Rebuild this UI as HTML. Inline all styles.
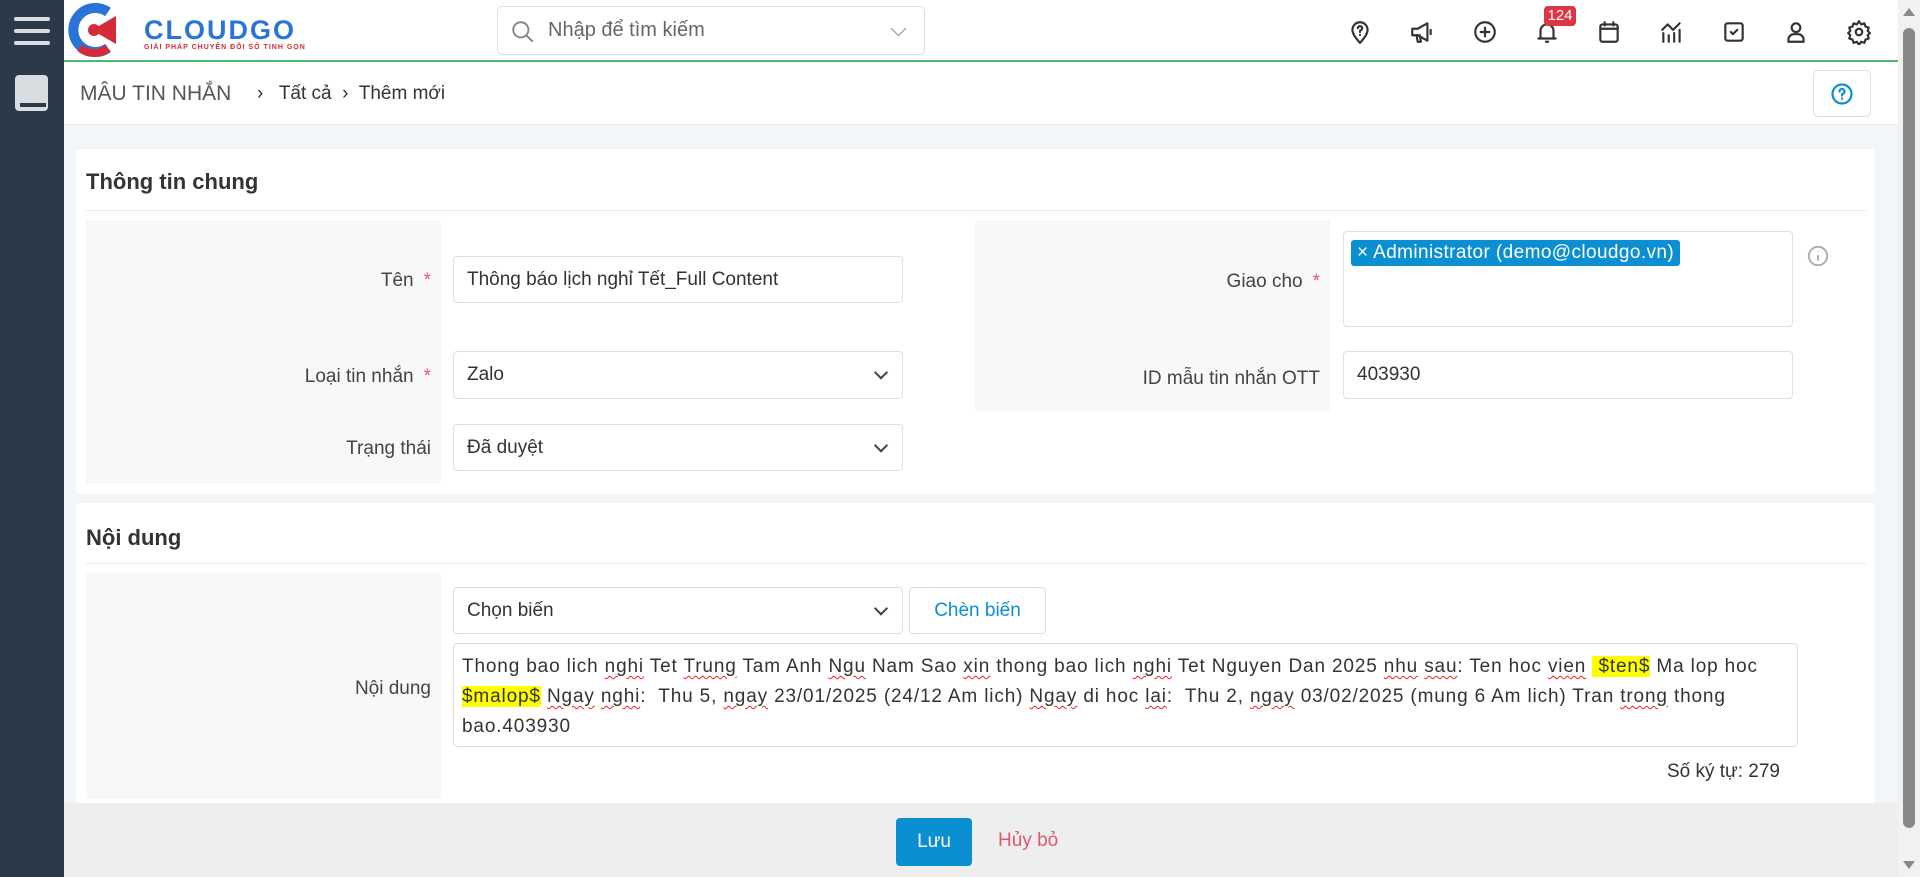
<!DOCTYPE html>
<html><head><meta charset="utf-8"><style>
*{box-sizing:border-box;margin:0;padding:0}
body{width:1920px;height:877px;overflow:hidden;background:#f3f6f9;font-family:"Liberation Sans",sans-serif;color:#333;position:relative;font-size:18px}
.abs{position:absolute}
.side{left:0;top:0;width:64px;height:877px;background:#2b3a49}
.top{left:64px;top:0;width:1834px;height:62px;background:#fff;border-bottom:2px solid #4cbb6c}
.bc{left:64px;top:62px;width:1834px;height:63px;background:#fff;border-bottom:1px solid #e3e6ea}
.card{background:#fff;border-radius:4px}
.gray{background:#f7f8fa}
.inp{background:#fff;border:1px solid #dcdfe3;border-radius:4px;padding:0 13px;display:flex;align-items:center;font-size:19px;color:#333}
.lbl{font-size:19px;color:#444;text-align:right}
.req{color:#e05a6c;margin-left:10px}
.chev{position:absolute;right:16px;top:50%;width:10px;height:10px;border-right:2px solid #444;border-bottom:2px solid #444;transform:translateY(-75%) rotate(45deg)}
.h{font-size:22px;font-weight:bold;color:#333}
.ul{text-decoration:underline wavy #e22;text-decoration-thickness:1px;text-underline-offset:3px}
.hl{background:#ffff00}
svg.ic{position:absolute;top:19px;width:26px;height:26px;fill:none;stroke:#333;stroke-width:2;stroke-linecap:round;stroke-linejoin:round}
</style></head><body>
<div class="abs side">
  <div class="abs" style="left:14px;top:17px;width:36px;height:4px;background:#d9dde2;border-radius:2px"></div>
  <div class="abs" style="left:14px;top:29px;width:36px;height:4px;background:#d9dde2;border-radius:2px"></div>
  <div class="abs" style="left:14px;top:41px;width:36px;height:4px;background:#d9dde2;border-radius:2px"></div>
  <div class="abs" style="left:15px;top:75px;width:33px;height:36px;background:#d9dde2;border-radius:4px"></div>
  <div class="abs" style="left:20px;top:103px;width:26px;height:4px;background:#2b3a49"></div>
</div>
<div class="abs top">
  <svg class="abs" style="left:4px;top:2px" width="62" height="56" viewBox="0 0 62 56"><path d="M40 10 A22 22 0 1 0 40 46" stroke="#2a74d8" stroke-width="10" fill="none"/><path d="M24 28 L48 14 L48 42 Z" fill="#d42a3a"/><circle cx="26" cy="28" r="6" fill="#d42a3a"/><path d="M12 46 A22 22 0 0 0 40 46" stroke="#d42a3a" stroke-width="8" fill="none"/></svg>
  <div class="abs" style="left:80px;top:15px;font-size:27px;font-weight:bold;color:#2a74d8;letter-spacing:2px">CLOUDGO</div>
  <div class="abs" style="left:80px;top:44px;font-size:7px;font-weight:bold;color:#d42a3a;letter-spacing:1px">GIẢI PHÁP CHUYỂN ĐỔI SỐ TINH GỌN</div>
  <div class="abs" style="left:433px;top:6px;width:428px;height:49px;border:1px solid #dcdfe3;border-radius:5px">
    <svg class="abs" style="left:12px;top:12px" width="26" height="26" viewBox="0 0 24 24" fill="none" stroke="#888" stroke-width="1.8"><circle cx="10" cy="10" r="7"/><path d="M15 15l6 6"/></svg>
    <div class="abs" style="left:50px;top:12px;font-size:20px;color:#666">Nhập để tìm kiếm</div>
    <div class="abs" style="right:20px;top:16px;width:11px;height:11px;border-right:1.5px solid #888;border-bottom:1.5px solid #888;transform:rotate(45deg)"></div>
  </div>
  <svg class="ic" style="left:1283px" viewBox="0 0 24 24"><path d="M12 22s-7-7-7-12a7 7 0 0 1 14 0c0 5-7 12-7 12z"/><path d="M10 8.5a2 2 0 1 1 2.5 2c-.5.2-.5.8-.5 1.5M12 14.5v.2"/></svg>
  <svg class="ic" style="left:1345px" viewBox="0 0 24 24"><path d="M3 9h5l9-5v16l-9-5H3z"/><path d="M7 15l1 6h3l-1-6"/><path d="M20 10v4"/></svg>
  <svg class="ic" style="left:1408px" viewBox="0 0 24 24"><circle cx="12" cy="12" r="9"/><path d="M12 8v8M8 12h8"/></svg>
  <svg class="ic" style="left:1470px" viewBox="0 0 24 24"><path d="M6 18V11a6 6 0 0 1 12 0v7M4 18h16M11 21h2"/></svg>
  <div class="abs" style="left:1480px;top:6px;width:32px;height:20px;background:#dc3545;color:#fff;font-size:15px;border-radius:4px;text-align:center;line-height:20px">124</div>
  <svg class="ic" style="left:1532px" viewBox="0 0 24 24"><rect x="4" y="5" width="16" height="16" rx="2"/><path d="M4 9h16M8 3v3M16 3v3"/></svg>
  <svg class="ic" style="left:1595px" viewBox="0 0 24 24"><path d="M4 21v-8M9 21v-6M14 21v-8M19 21v-11M3 10l5-5 5 5 6-6"/></svg>
  <svg class="ic" style="left:1657px" viewBox="0 0 24 24"><rect x="4" y="4" width="16" height="16" rx="2"/><path d="M9 12l2 2 4-4"/></svg>
  <svg class="ic" style="left:1719px" viewBox="0 0 24 24"><circle cx="12" cy="8" r="4"/><path d="M5 21v-2a5 5 0 0 1 5-5h4a5 5 0 0 1 5 5v2z"/></svg>
  <svg class="ic" style="left:1782px" viewBox="0 0 24 24"><circle cx="12" cy="12" r="3"/><path d="M12 2l2 3 3-1 1 3 3 1-1 3 2 2-2 2 1 3-3 1-1 3-3-1-2 3-2-3-3 1-1-3-3-1 1-3-2-2 2-2-1-3 3-1 1-3 3 1z"/></svg>
</div>
<div class="abs bc">
  <div class="abs" style="left:16px;top:20px;font-size:21px;color:#555">MÂU TIN NHẮN</div>
  <div class="abs" style="left:193px;top:21px;font-size:19px;color:#333">›&nbsp;&nbsp; Tất cả &nbsp;›&nbsp; Thêm mới</div>
  <div class="abs" style="left:1749px;top:8px;width:58px;height:47px;border:1px solid #dcdfe3;border-radius:5px">
    <svg class="abs" style="left:16px;top:11px" width="24" height="24" viewBox="0 0 24 24" fill="none" stroke="#0b8fd3" stroke-width="2.2" stroke-linecap="round"><circle cx="12" cy="12" r="9.5"/><path d="M9.5 9.5a2.5 2.5 0 1 1 3 2.4c-.5.2-.5.8-.5 1.6M12 16.5v.3"/></svg>
  </div>
</div>

<div class="abs card" style="left:76px;top:149px;width:1799px;height:345px">
  <div class="abs h" style="left:10px;top:20px">Thông tin chung</div>
  <div class="abs" style="left:10px;top:61px;width:1780px;height:1px;background:#e8eaed"></div>
  <div class="abs gray" style="left:10px;top:71px;width:355px;height:264px"></div>
  <div class="abs lbl" style="left:10px;top:121px;width:345px">Tên<span class="req">*</span></div>
  <div class="abs lbl" style="left:10px;top:217px;width:345px">Loại tin nhắn<span class="req">*</span></div>
  <div class="abs lbl" style="left:10px;top:289px;width:345px">Trạng thái</div>
  <div class="abs inp" style="left:377px;top:107px;width:450px;height:47px">Thông báo lịch nghỉ Tết_Full Content</div>
  <div class="abs inp" style="left:377px;top:202px;width:450px;height:48px">Zalo<span class="chev"></span></div>
  <div class="abs inp" style="left:377px;top:275px;width:450px;height:47px">Đã duyệt<span class="chev"></span></div>
  <div class="abs gray" style="left:899px;top:71px;width:355px;height:191px"></div>
  <div class="abs lbl" style="left:899px;top:122px;width:345px">Giao cho<span class="req">*</span></div>
  <div class="abs lbl" style="left:899px;top:219px;width:345px">ID mẫu tin nhắn OTT</div>
  <div class="abs inp" style="left:1267px;top:82px;width:450px;height:96px;align-items:flex-start;padding:8px 7px">
    <span style="background:#0b8fd3;color:#fff;border-radius:3px;padding:2px 6px;font-size:19px;letter-spacing:0.4px">× Administrator (demo@cloudgo.vn)</span></div>
  <div class="abs inp" style="left:1267px;top:202px;width:450px;height:48px">403930</div>
  <svg class="abs" style="left:1731px;top:96px" width="22" height="22" viewBox="0 0 24 24" fill="none" stroke="#aaa" stroke-width="2"><circle cx="12" cy="12" r="10"/><path d="M12 11v6M12 7v.5"/></svg>
</div>

<div class="abs card" style="left:76px;top:503px;width:1799px;height:300px">
  <div class="abs h" style="left:10px;top:22px">Nội dung</div>
  <div class="abs" style="left:10px;top:60px;width:1780px;height:1px;background:#e8eaed"></div>
  <div class="abs gray" style="left:10px;top:70px;width:355px;height:226px"></div>
  <div class="abs lbl" style="left:10px;top:175px;width:345px">Nội dung</div>
  <div class="abs inp" style="left:377px;top:84px;width:450px;height:47px">Chọn biến<span class="chev"></span></div>
  <div class="abs inp" style="left:833px;top:84px;width:137px;height:47px;justify-content:center;color:#0b8fd3">Chèn biến</div>
  <div class="abs inp" style="left:377px;top:140px;width:1345px;height:104px;align-items:flex-start;padding:8px 8px;line-height:30px;font-size:19px;letter-spacing:0.85px">
    <div style="white-space:nowrap">Thong bao lich <span class="ul">nghi</span> Tet <span class="ul">Trung</span> Tam Anh <span class="ul">Ngu</span> Nam Sao <span class="ul">xin</span> thong bao lich <span class="ul">nghi</span> Tet Nguyen Dan 2025 <span class="ul">nhu</span> <span class="ul">sau</span>: Ten hoc <span class="ul">vien</span> <span class="hl">&nbsp;$ten$</span> Ma lop hoc<br><span class="hl">$malop$</span> <span class="ul">Ngay</span> <span class="ul">nghi</span>:&nbsp; Thu 5, <span class="ul">ngay</span> 23/01/2025 (24/12 Am lich) <span class="ul">Ngay</span> di hoc <span class="ul">lai</span>:&nbsp; Thu 2, <span class="ul">ngay</span> 03/02/2025 (mung 6 Am lich) Tran <span class="ul">trong</span> thong<br>bao.403930</div>
  </div>
  <div class="abs" style="left:1500px;top:258px;width:204px;text-align:right;font-size:19px">Số ký tự: 279</div>
</div>

<div class="abs" style="left:64px;top:803px;width:1834px;height:74px;background:#eeeeee">
  <div class="abs" style="left:832px;top:15px;width:76px;height:48px;background:#0b8fd3;border-radius:4px;color:#fff;text-align:center;line-height:48px;font-size:19px">Lưu</div>
  <div class="abs" style="left:934px;top:27px;color:#e05a6c;font-size:19px">Hủy bỏ</div>
</div>
<div class="abs" style="left:1898px;top:0;width:22px;height:877px;background:#f1f1f1">
  <div class="abs" style="left:5px;top:8px;width:0;height:0;border-left:6px solid transparent;border-right:6px solid transparent;border-bottom:8px solid #888"></div>
  <div class="abs" style="left:5px;top:28px;width:12px;height:800px;background:#888;border-radius:6px"></div>
  <div class="abs" style="left:5px;top:861px;width:0;height:0;border-left:6px solid transparent;border-right:6px solid transparent;border-top:8px solid #888"></div>
</div>
</body></html>
